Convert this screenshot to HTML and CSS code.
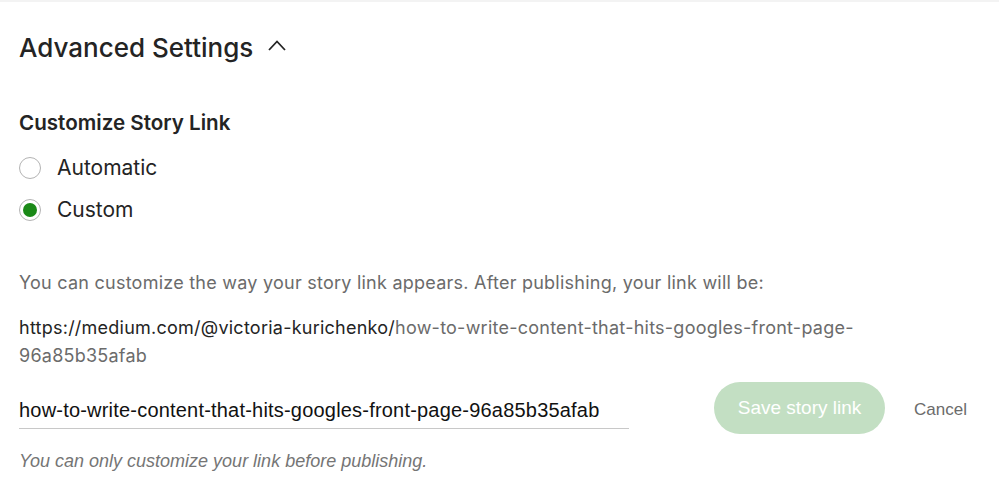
FILE: index.html
```html
<!DOCTYPE html>
<html>
<head>
<meta charset="utf-8">
<link rel="stylesheet" href="styles.css">
</head>
<body>
<div class="page">
  <h2 class="title">Advanced Settings
    <svg class="chev" width="20" height="14" viewBox="0 0 20 14"><path d="M2 12 L10 3.5 L18 12" fill="none" stroke="#242424" stroke-width="1.8"/></svg>
  </h2>
  <h3 class="subtitle">Customize Story Link</h3>
  <div class="radios">
    <label class="radio"><span class="dot"></span>Automatic</label>
    <label class="radio"><span class="dot on"></span>Custom</label>
  </div>
  <p class="desc">You can customize the way your story link appears. After publishing, your link will be:</p>
  <p class="url">https://medium.com/@victoria-kurichenko/<span class="slug">how-to-write-content-that-hits-googles-front-page-96a85b35afab</span></p>
  <div class="editrow">
    <div class="field">how-to-write-content-that-hits-googles-front-page-96a85b35afab</div>
    <button class="save">Save story link</button>
    <span class="cancel">Cancel</span>
  </div>
  <p class="note">You can only customize your link before publishing.</p>
</div>
</body>
</html>
```

FILE: styles.css
```css
html, body {
  margin: 0;
  background: #fff;
}
body {
  border-top: 2px solid #f3f3f3;
}
.page {
  padding: 0 19px;
  font-family: Inter, "Noto Sans", sans-serif;
  color: #242424;
}
.title {
  margin: 30px 0 0;
  font-size: 26px;
  line-height: 32px;
  font-weight: 500;
  display: flex;
  align-items: center;
}
.chev {
  margin-left: 14px;
  margin-top: -6px;
}
.subtitle {
  margin: 47px 0 0;
  font-size: 20.6px;
  line-height: 24px;
  font-weight: 600;
}
.radios {
  margin-top: 22px;
  display: flex;
  flex-direction: column;
  gap: 20px;
}
.radio {
  display: flex;
  align-items: center;
  font-size: 21px;
  line-height: 22px;
  color: #242424;
}
.dot {
  width: 20px;
  height: 20px;
  border: 1px solid #b3b3b3;
  border-radius: 50%;
  margin-right: 16px;
  box-sizing: content-box;
  position: relative;
}
.dot.on::after {
  content: "";
  position: absolute;
  left: 3px;
  top: 3px;
  width: 14px;
  height: 14px;
  border-radius: 50%;
  background: #1a8917;
}
.desc {
  margin: 48px 0 0;
  font-size: 18px;
  line-height: 28px;
  letter-spacing: 0.24px;
  color: #6b6b6b;
}
.url {
  margin: 17px 0 0;
  max-width: 880px;
  font-size: 18px;
  line-height: 28px;
  letter-spacing: 0.24px;
  color: #242424;
}
.slug {
  color: #6b6b6b;
}
.editrow {
  margin-top: 12px;
  display: flex;
  align-items: flex-start;
}
.field {
  width: 610px;
  box-sizing: border-box;
  padding-top: 16px;
  padding-bottom: 6px;
  border-bottom: 1px solid #c8c8c8;
  font-family: "Liberation Sans", Arial, sans-serif;
  font-size: 20px;
  line-height: 24px;
  letter-spacing: 0.2px;
  color: #111;
}
.save {
  margin-left: 85px;
  width: 171px;
  height: 52px;
  border: none;
  border-radius: 26px;
  background: #c3dfc3;
  color: #fff;
  font-family: "Liberation Sans", Arial, sans-serif;
  font-size: 19px;
}
.cancel {
  align-self: center;
  margin-left: 29px;
  margin-top: 4px;
  font-family: "Liberation Sans", Arial, sans-serif;
  font-size: 17px;
  color: #6b6b6b;
}
.note {
  margin: 16px 0 0;
  font-family: "Liberation Sans", Arial, sans-serif;
  font-style: italic;
  font-size: 18px;
  line-height: 22px;
  color: #757575;
}
```
